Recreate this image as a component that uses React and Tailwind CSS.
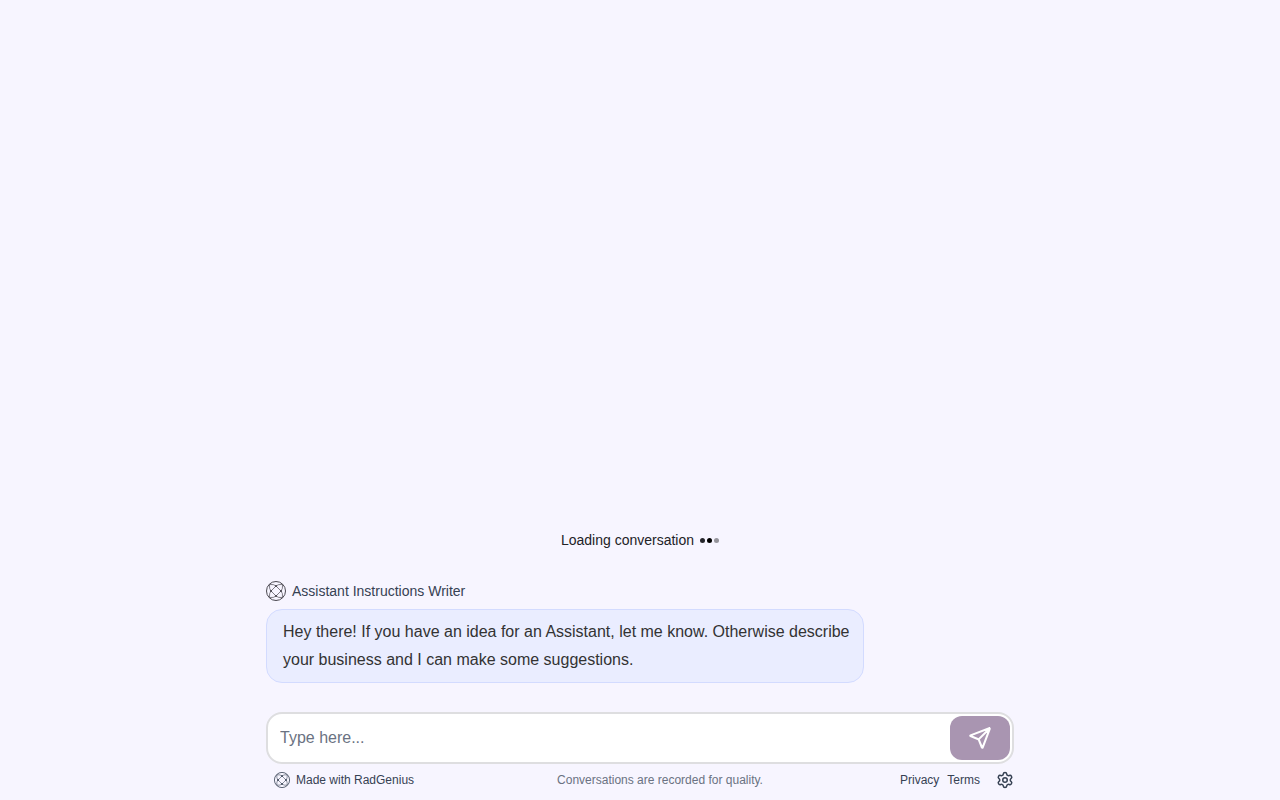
import { IoPaperPlaneOutline } from "react-icons/io5";
import { Settings } from "lucide-react";

function Logo({ className }) {
  return (
    <svg viewBox="0 0 20 20" className={className} fill="none" stroke="currentColor" aria-hidden="true">
      <circle cx="10" cy="10" r="9.5" strokeWidth="1" />
      <g strokeWidth="0.7">
        <path d="M10 5 15 10 10 15 5 10Z" />
        <path d="M3.5 3.5Q8 3 10 5Q12 3 16.5 3.5Q17 8 15 10Q17 12 16.5 16.5Q12 17 10 15Q8 17 3.5 16.5Q3 12 5 10Q3 8 3.5 3.5Z" />
      </g>
      <g fill="currentColor" stroke="none">
        <circle cx="10" cy="5" r="1.1" />
        <circle cx="15" cy="10" r="1.1" />
        <circle cx="10" cy="15" r="1.1" />
        <circle cx="5" cy="10" r="1.1" />
      </g>
    </svg>
  );
}

export default function App() {
  return (
    <div className="flex min-h-screen flex-col bg-[#f7f5ff] px-4 font-['Liberation_Sans',Arial,sans-serif] text-gray-800">
      <div className="mx-auto flex w-full max-w-[748px] grow flex-col justify-end">
        <main>
          <div role="status" className="flex h-5 items-center justify-center gap-1.5 text-sm text-[#222226]">
            <span>Loading conversation</span>
            <span className="flex gap-0.5" aria-hidden="true">
              <span className="size-[5px] rounded-full bg-[#25252b]" />
              <span className="size-[5px] rounded-full bg-black" />
              <span className="size-[5px] rounded-full bg-[#95949b]" />
            </span>
          </div>
          <div className="mt-[31px] flex h-5 items-center gap-1.5 text-sm text-gray-700">
            <Logo className="size-5 shrink-0 text-[#4a4850]" />
            <span>Assistant Instructions Writer</span>
          </div>
          <p className="mt-2 max-w-[598px] rounded-2xl border border-[#d3dbff] bg-[#eaedff] py-2 pr-2 pl-4 text-base leading-7 text-[#333333]">
            Hey there! If you have an idea for an Assistant, let me know. Otherwise describe your business and I can make some suggestions.
          </p>
        </main>
        <form className="mt-[29px] flex h-[52px] rounded-2xl border-2 border-[#dedee0] bg-white p-0.5" onSubmit={(e) => e.preventDefault()}>
          <input
            type="text"
            aria-label="Message"
            placeholder="Type here..."
            className="min-w-0 grow bg-transparent px-2.5 text-base outline-none placeholder:text-gray-500"
          />
          <button type="submit" aria-label="Send" className="flex w-[60px] items-center justify-center rounded-xl bg-[#a995b1] text-white">
            <IoPaperPlaneOutline className="size-6 [&_path]:[stroke-width:44px]" />
          </button>
        </form>
        <footer className="grid h-9 grid-cols-[1fr_auto_1fr] items-center pb-1 text-xs text-gray-700">
          <a href="#home" className="flex items-center gap-1.5 pl-2">
            <Logo className="size-4" />
            Made with RadGenius
          </a>
          <span className="pl-10 text-gray-500">Conversations are recorded for quality.</span>
          <div className="flex items-center justify-end gap-2">
            <a href="#privacy">Privacy</a>
            <a href="#terms">Terms</a>
            <button type="button" aria-label="Settings" className="ml-2">
              <Settings className="size-[18px]" />
            </button>
          </div>
        </footer>
      </div>
    </div>
  );
}
